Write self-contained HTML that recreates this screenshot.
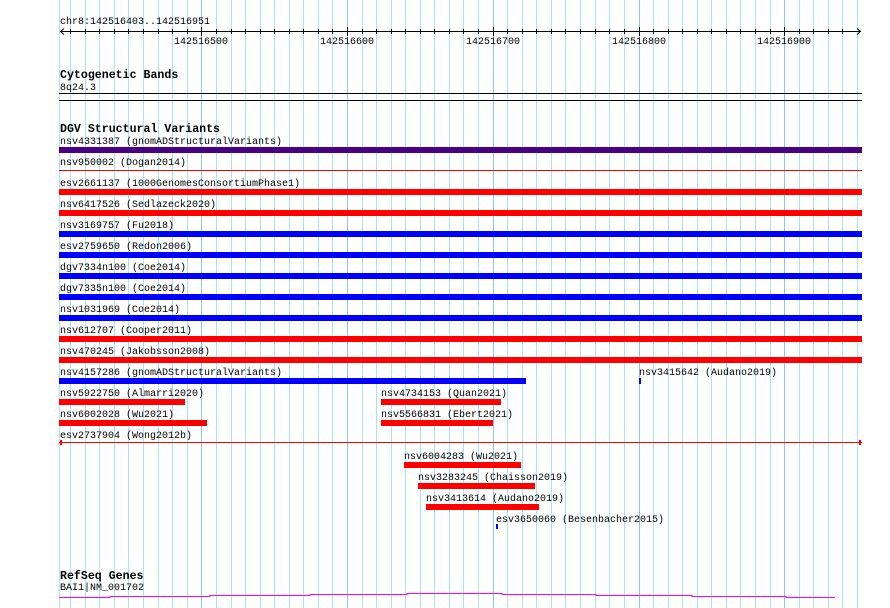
<!DOCTYPE html>
<html><head><meta charset="utf-8"><style>
html,body{margin:0;padding:0;background:#fff;width:890px;height:608px;overflow:hidden}
svg text{font-family:"Liberation Mono",monospace;font-size:10px;fill:#000}
svg text.b{font-weight:bold;font-size:11.6px}
</style></head><body>
<svg width="890" height="608" xmlns="http://www.w3.org/2000/svg" shape-rendering="crispEdges">
<g id="grid" stroke-width="1">
<line x1="59.5" y1="0" x2="59.5" y2="608" stroke="#a8e4ee"/>
<line x1="70.5" y1="0" x2="70.5" y2="608" stroke="#a8e4ee"/>
<line x1="85.5" y1="0" x2="85.5" y2="608" stroke="#a8e4ee"/>
<line x1="99.5" y1="0" x2="99.5" y2="608" stroke="#a8e4ee"/>
<line x1="114.5" y1="0" x2="114.5" y2="608" stroke="#a8e4ee"/>
<line x1="128.5" y1="0" x2="128.5" y2="608" stroke="#a8e4ee"/>
<line x1="143.5" y1="0" x2="143.5" y2="608" stroke="#a8e4ee"/>
<line x1="158.5" y1="0" x2="158.5" y2="608" stroke="#a8e4ee"/>
<line x1="172.5" y1="0" x2="172.5" y2="608" stroke="#a8e4ee"/>
<line x1="187.5" y1="0" x2="187.5" y2="608" stroke="#a8e4ee"/>
<line x1="201.5" y1="0" x2="201.5" y2="608" stroke="#8cc4ea"/>
<line x1="216.5" y1="0" x2="216.5" y2="608" stroke="#a8e4ee"/>
<line x1="231.5" y1="0" x2="231.5" y2="608" stroke="#a8e4ee"/>
<line x1="245.5" y1="0" x2="245.5" y2="608" stroke="#a8e4ee"/>
<line x1="260.5" y1="0" x2="260.5" y2="608" stroke="#a8e4ee"/>
<line x1="274.5" y1="0" x2="274.5" y2="608" stroke="#a8e4ee"/>
<line x1="289.5" y1="0" x2="289.5" y2="608" stroke="#a8e4ee"/>
<line x1="303.5" y1="0" x2="303.5" y2="608" stroke="#a8e4ee"/>
<line x1="318.5" y1="0" x2="318.5" y2="608" stroke="#a8e4ee"/>
<line x1="332.5" y1="0" x2="332.5" y2="608" stroke="#a8e4ee"/>
<line x1="347.5" y1="0" x2="347.5" y2="608" stroke="#8cc4ea"/>
<line x1="362.5" y1="0" x2="362.5" y2="608" stroke="#a8e4ee"/>
<line x1="376.5" y1="0" x2="376.5" y2="608" stroke="#a8e4ee"/>
<line x1="391.5" y1="0" x2="391.5" y2="608" stroke="#a8e4ee"/>
<line x1="405.5" y1="0" x2="405.5" y2="608" stroke="#a8e4ee"/>
<line x1="420.5" y1="0" x2="420.5" y2="608" stroke="#a8e4ee"/>
<line x1="434.5" y1="0" x2="434.5" y2="608" stroke="#a8e4ee"/>
<line x1="449.5" y1="0" x2="449.5" y2="608" stroke="#a8e4ee"/>
<line x1="463.5" y1="0" x2="463.5" y2="608" stroke="#a8e4ee"/>
<line x1="478.5" y1="0" x2="478.5" y2="608" stroke="#a8e4ee"/>
<line x1="493.5" y1="0" x2="493.5" y2="608" stroke="#8cc4ea"/>
<line x1="507.5" y1="0" x2="507.5" y2="608" stroke="#a8e4ee"/>
<line x1="522.5" y1="0" x2="522.5" y2="608" stroke="#a8e4ee"/>
<line x1="536.5" y1="0" x2="536.5" y2="608" stroke="#a8e4ee"/>
<line x1="551.5" y1="0" x2="551.5" y2="608" stroke="#a8e4ee"/>
<line x1="565.5" y1="0" x2="565.5" y2="608" stroke="#a8e4ee"/>
<line x1="580.5" y1="0" x2="580.5" y2="608" stroke="#a8e4ee"/>
<line x1="595.5" y1="0" x2="595.5" y2="608" stroke="#a8e4ee"/>
<line x1="609.5" y1="0" x2="609.5" y2="608" stroke="#a8e4ee"/>
<line x1="624.5" y1="0" x2="624.5" y2="608" stroke="#a8e4ee"/>
<line x1="639.5" y1="0" x2="639.5" y2="608" stroke="#8cc4ea"/>
<line x1="653.5" y1="0" x2="653.5" y2="608" stroke="#a8e4ee"/>
<line x1="668.5" y1="0" x2="668.5" y2="608" stroke="#a8e4ee"/>
<line x1="682.5" y1="0" x2="682.5" y2="608" stroke="#a8e4ee"/>
<line x1="697.5" y1="0" x2="697.5" y2="608" stroke="#a8e4ee"/>
<line x1="711.5" y1="0" x2="711.5" y2="608" stroke="#a8e4ee"/>
<line x1="726.5" y1="0" x2="726.5" y2="608" stroke="#a8e4ee"/>
<line x1="740.5" y1="0" x2="740.5" y2="608" stroke="#a8e4ee"/>
<line x1="755.5" y1="0" x2="755.5" y2="608" stroke="#a8e4ee"/>
<line x1="770.5" y1="0" x2="770.5" y2="608" stroke="#a8e4ee"/>
<line x1="784.5" y1="0" x2="784.5" y2="608" stroke="#8cc4ea"/>
<line x1="799.5" y1="0" x2="799.5" y2="608" stroke="#a8e4ee"/>
<line x1="813.5" y1="0" x2="813.5" y2="608" stroke="#a8e4ee"/>
<line x1="828.5" y1="0" x2="828.5" y2="608" stroke="#a8e4ee"/>
<line x1="842.5" y1="0" x2="842.5" y2="608" stroke="#a8e4ee"/>
<line x1="857.5" y1="0" x2="857.5" y2="608" stroke="#a8e4ee"/>
</g>
<!-- ruler -->
<text x="60" y="24">chr8:142516403..142516951</text>
<line x1="60" y1="31.5" x2="860" y2="31.5" stroke="#000"/>
<path d="M64 28.5 L60.5 31.5 L64 34.5 M857 28.5 L860.5 31.5 L857 34.5" stroke="#000" fill="none" shape-rendering="auto"/>
<g stroke="#000">
<line x1="70.5" y1="29" x2="70.5" y2="34"/><line x1="85.5" y1="29" x2="85.5" y2="34"/><line x1="99.5" y1="29" x2="99.5" y2="34"/><line x1="114.5" y1="29" x2="114.5" y2="34"/><line x1="128.5" y1="29" x2="128.5" y2="34"/><line x1="143.5" y1="29" x2="143.5" y2="34"/><line x1="158.5" y1="29" x2="158.5" y2="34"/><line x1="172.5" y1="29" x2="172.5" y2="34"/><line x1="187.5" y1="29" x2="187.5" y2="34"/><line x1="201.5" y1="27" x2="201.5" y2="36"/><line x1="216.5" y1="29" x2="216.5" y2="34"/><line x1="231.5" y1="29" x2="231.5" y2="34"/><line x1="245.5" y1="29" x2="245.5" y2="34"/><line x1="260.5" y1="29" x2="260.5" y2="34"/><line x1="274.5" y1="29" x2="274.5" y2="34"/><line x1="289.5" y1="29" x2="289.5" y2="34"/><line x1="303.5" y1="29" x2="303.5" y2="34"/><line x1="318.5" y1="29" x2="318.5" y2="34"/><line x1="332.5" y1="29" x2="332.5" y2="34"/><line x1="347.5" y1="27" x2="347.5" y2="36"/><line x1="362.5" y1="29" x2="362.5" y2="34"/><line x1="376.5" y1="29" x2="376.5" y2="34"/><line x1="391.5" y1="29" x2="391.5" y2="34"/><line x1="405.5" y1="29" x2="405.5" y2="34"/><line x1="420.5" y1="29" x2="420.5" y2="34"/><line x1="434.5" y1="29" x2="434.5" y2="34"/><line x1="449.5" y1="29" x2="449.5" y2="34"/><line x1="463.5" y1="29" x2="463.5" y2="34"/><line x1="478.5" y1="29" x2="478.5" y2="34"/><line x1="493.5" y1="27" x2="493.5" y2="36"/><line x1="507.5" y1="29" x2="507.5" y2="34"/><line x1="522.5" y1="29" x2="522.5" y2="34"/><line x1="536.5" y1="29" x2="536.5" y2="34"/><line x1="551.5" y1="29" x2="551.5" y2="34"/><line x1="565.5" y1="29" x2="565.5" y2="34"/><line x1="580.5" y1="29" x2="580.5" y2="34"/><line x1="595.5" y1="29" x2="595.5" y2="34"/><line x1="609.5" y1="29" x2="609.5" y2="34"/><line x1="624.5" y1="29" x2="624.5" y2="34"/><line x1="639.5" y1="27" x2="639.5" y2="36"/><line x1="653.5" y1="29" x2="653.5" y2="34"/><line x1="668.5" y1="29" x2="668.5" y2="34"/><line x1="682.5" y1="29" x2="682.5" y2="34"/><line x1="697.5" y1="29" x2="697.5" y2="34"/><line x1="711.5" y1="29" x2="711.5" y2="34"/><line x1="726.5" y1="29" x2="726.5" y2="34"/><line x1="740.5" y1="29" x2="740.5" y2="34"/><line x1="755.5" y1="29" x2="755.5" y2="34"/><line x1="770.5" y1="29" x2="770.5" y2="34"/><line x1="784.5" y1="27" x2="784.5" y2="36"/><line x1="799.5" y1="29" x2="799.5" y2="34"/><line x1="813.5" y1="29" x2="813.5" y2="34"/><line x1="828.5" y1="29" x2="828.5" y2="34"/><line x1="842.5" y1="29" x2="842.5" y2="34"/>
</g>
<text x="174" y="44">142516500</text>
<text x="320" y="44">142516600</text>
<text x="466" y="44">142516700</text>
<text x="612" y="44">142516800</text>
<text x="757" y="44">142516900</text>
<!-- cytobands -->
<text class="b" x="60" y="78">Cytogenetic Bands</text>
<text x="60" y="90">8q24.3</text>
<rect x="59" y="93" width="803" height="1" fill="#000"/>
<rect x="59" y="100" width="803" height="1" fill="#000"/>
<!-- DGV -->
<text class="b" x="60" y="132">DGV Structural Variants</text>
<text x="60" y="144">nsv4331387 (gnomADStructuralVariants)</text>
<rect x="59" y="147" width="803" height="6" fill="#4b0082"/>
<text x="60" y="165">nsv950002 (Dogan2014)</text>
<rect x="59" y="170" width="803" height="1" fill="#f00"/>
<text x="60" y="186">esv2661137 (1000GenomesConsortiumPhase1)</text>
<rect x="59" y="189" width="803" height="6" fill="#f00"/>
<text x="60" y="207">nsv6417526 (Sedlazeck2020)</text>
<rect x="59" y="210" width="803" height="6" fill="#f00"/>
<text x="60" y="228">nsv3169757 (Fu2018)</text>
<rect x="59" y="231" width="803" height="6" fill="#00f"/>
<text x="60" y="249">esv2759650 (Redon2006)</text>
<rect x="59" y="252" width="803" height="6" fill="#00f"/>
<text x="60" y="270">dgv7334n100 (Coe2014)</text>
<rect x="59" y="273" width="803" height="6" fill="#00f"/>
<text x="60" y="291">dgv7335n100 (Coe2014)</text>
<rect x="59" y="294" width="803" height="6" fill="#00f"/>
<text x="60" y="312">nsv1031969 (Coe2014)</text>
<rect x="59" y="315" width="803" height="6" fill="#00f"/>
<text x="60" y="333">nsv612707 (Cooper2011)</text>
<rect x="59" y="336" width="803" height="6" fill="#f00"/>
<text x="60" y="354">nsv470245 (Jakobsson2008)</text>
<rect x="59" y="357" width="803" height="6" fill="#f00"/>
<text x="60" y="375">nsv4157286 (gnomADStructuralVariants)</text>
<rect x="59" y="378" width="467" height="6" fill="#00f"/>
<text x="639" y="375">nsv3415642 (Audano2019)</text>
<rect x="639" y="378" width="2" height="6" fill="#00f"/>
<text x="60" y="396">nsv5922750 (Almarri2020)</text>
<rect x="59" y="399" width="126" height="6" fill="#f00"/>
<text x="381" y="396">nsv4734153 (Quan2021)</text>
<rect x="381" y="399" width="120" height="6" fill="#f00"/>
<text x="60" y="417">nsv6002028 (Wu2021)</text>
<rect x="59" y="420" width="148" height="6" fill="#f00"/>
<text x="381" y="417">nsv5566831 (Ebert2021)</text>
<rect x="381" y="420" width="112" height="6" fill="#f00"/>
<text x="60" y="438">esv2737904 (Wong2012b)</text>
<rect x="59" y="442" width="803" height="1" fill="#f00"/>
<rect x="60" y="440" width="2" height="5" fill="#f00"/>
<rect x="859" y="440" width="2" height="5" fill="#f00"/>
<text x="404" y="459">nsv6004283 (Wu2021)</text>
<rect x="404" y="462" width="117" height="6" fill="#f00"/>
<text x="418" y="480">nsv3283245 (Chaisson2019)</text>
<rect x="418" y="483" width="117" height="6" fill="#f00"/>
<text x="426" y="501">nsv3413614 (Audano2019)</text>
<rect x="426" y="504" width="113" height="6" fill="#f00"/>
<text x="496" y="522">esv3650060 (Besenbacher2015)</text>
<rect x="496" y="524" width="2" height="5" fill="#00f"/>
<!-- RefSeq -->
<text class="b" x="60" y="579">RefSeq Genes</text>
<text x="60" y="590">BAI1|NM_001702</text>
<path d="M59 597.5 H110 V596.5 H210 V595.5 H310 V594.5 H407 V593.5 H502 V594.5 H596 V595.5 H692 V596.5 H786 V597.5 H835" stroke="#f0f" fill="none"/>
</svg>
</body></html>
